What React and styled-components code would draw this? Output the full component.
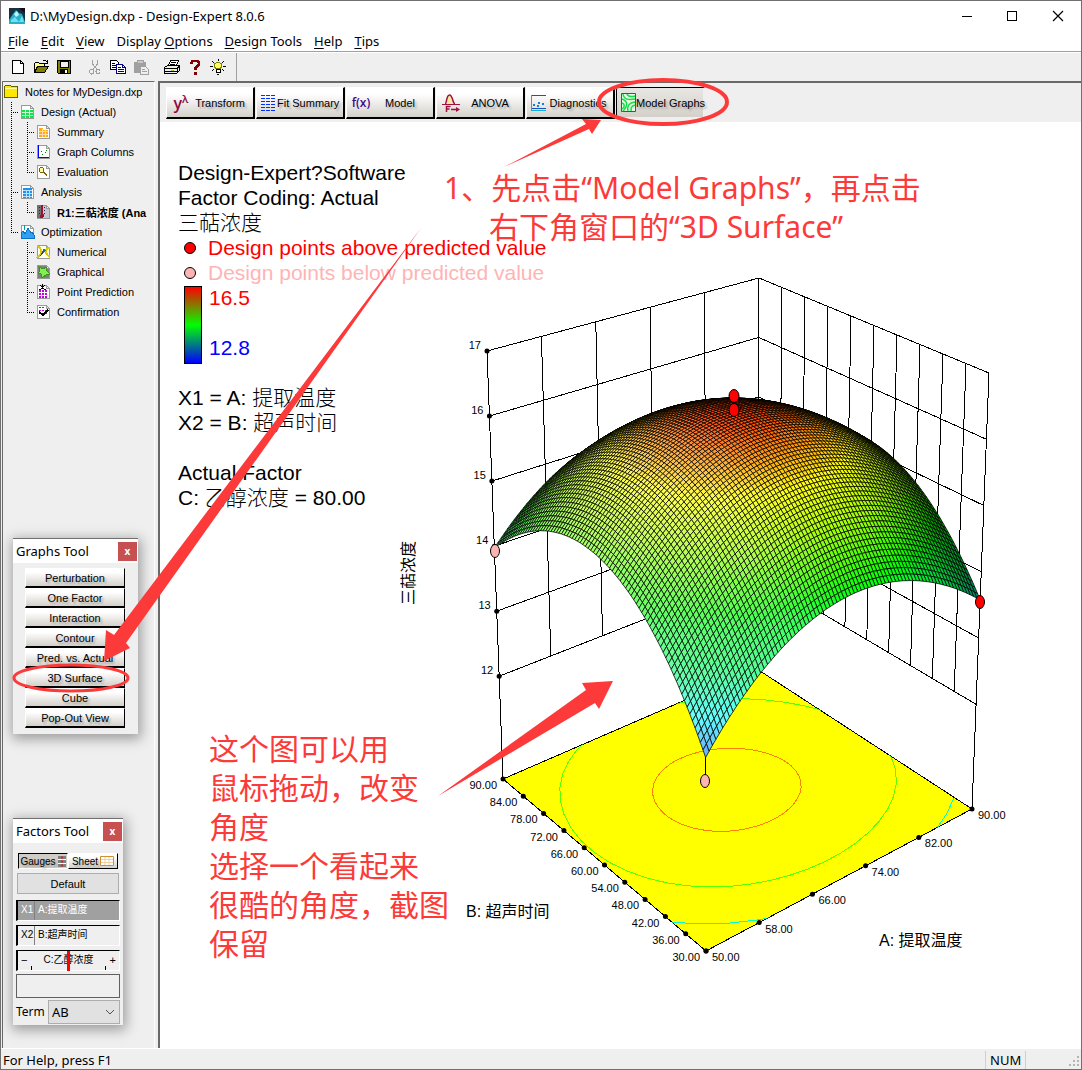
import React from "react";
import styled, { createGlobalStyle, css } from "styled-components";

const RED = "#fd3a3a";
const UI = `"Noto Sans", "Noto Sans CJK SC", sans-serif`;
const ARIAL = `"Liberation Sans", "Noto Sans CJK SC", sans-serif`;

/* ---------- response surface ---------- */

// corners of the plot box, floor first, then top
const BOX = {
  f00: [706, 951],
  f10: [972, 809],
  f01: [503, 779],
  f11: [757, 669],
  t00: [705, 468],
  t10: [989, 373],
  t01: [487, 351],
  t11: [759, 278],
};
const Z_FLOOR = 10.42;
const Z_TOP = 17;
const STEPS = 80;

const level = (z) => (z - Z_FLOOR) / (Z_TOP - Z_FLOOR);

function project(a, b, t) {
  return [0, 1].map((i) => {
    const mix = (p) =>
      BOX[p + "00"][i] * (1 - a) * (1 - b) +
      BOX[p + "10"][i] * a * (1 - b) +
      BOX[p + "01"][i] * (1 - a) * b +
      BOX[p + "11"][i] * a * b;
    return mix("f") * (1 - t) + mix("t") * t;
  });
}

const response = (a, b) =>
  0.4006 + 0.77 * a - 0.691 * a * a + 0.961 * b - 0.822 * b * b - 0.07 * a * b;

const toPoints = (list) =>
  list.map((p) => p.map((n) => n.toFixed(1)).join(",")).join(" ");

function ramp(stops, v) {
  if (v <= stops[0][0]) return stops[0][1];
  for (let i = 1; i < stops.length; i++) {
    const [x1, y1] = stops[i];
    const [x0, y0] = stops[i - 1];
    if (v <= x1) return y0 + ((v - x0) / (x1 - x0)) * (y1 - y0);
  }
  return stops[stops.length - 1][1];
}

const HUES = [
  [0.4, 215],
  [0.47, 176],
  [0.53, 145],
  [0.6, 128],
  [0.66, 105],
  [0.72, 82],
  [0.79, 60],
  [0.83, 38],
  [0.875, 14],
];
const LIGHTS = [
  [0, 70],
  [0.3, 64],
  [0.5, 53],
  [0.72, 50],
  [0.85, 42],
  [1, 26],
];

// cells are ordered from the far corner to the near one
function buildMesh() {
  const cells = [];
  for (let i = STEPS - 1; i >= 0; i--) {
    for (let j = STEPS - 1; j >= 0; j--) {
      const a0 = i / STEPS;
      const a1 = (i + 1) / STEPS;
      const b0 = j / STEPS;
      const b1 = (j + 1) / STEPS;
      const am = (a0 + a1) / 2;
      const bm = (b0 + b1) / 2;
      const corner = (a, b) => project(a, b, response(a, b));
      cells.push({
        key: `${i}-${j}`,
        points: toPoints([
          corner(a0, b0),
          corner(a1, b0),
          corner(a1, b1),
          corner(a0, b1),
        ]),
        fill: `hsl(${ramp(HUES, response(am, bm)).toFixed(0)}, 100%, ${ramp(
          LIGHTS,
          am
        ).toFixed(0)}%)`,
      });
    }
  }
  return cells;
}

// contour of the quadratic at a given drop below its peak
function contour(drop) {
  const pa = 0.522;
  const pb = 0.565;
  const pts = [];
  for (let k = 0; k < 48; k++) {
    const th = (k / 48) * Math.PI * 2;
    const ca = Math.cos(th);
    const cb = Math.sin(th);
    const r = Math.sqrt(
      drop / (0.691 * ca * ca + 0.822 * cb * cb + 0.07 * ca * cb)
    );
    pts.push(project(pa + r * ca, pb + r * cb, 0));
  }
  return toPoints(pts);
}

const MESH = buildMesh();
const FLOOR = toPoints([BOX.f00, BOX.f10, BOX.f11, BOX.f01]);
const Z_TICKS = [17, 16, 15, 14, 13, 12];
const A_TICKS = [50, 58, 66, 74, 82, 90];
const B_TICKS = [30, 36, 42, 48, 54, 60, 66, 72, 78, 84, 90];

function Line({ from, to }) {
  return <line x1={from[0]} y1={from[1]} x2={to[0]} y2={to[1]} />;
}

function Dot({ at }) {
  return <ellipse cx={at[0]} cy={at[1]} rx="2.5" ry="2.5" />;
}

function SurfacePlot() {
  const low = level(12);
  return (
    <Plot viewBox="390 260 640 720" width="640" height="720" aria-label="3D Surface">
      <clipPath id="floor">
        <polygon points={FLOOR} />
      </clipPath>
      <g stroke="#000" strokeWidth="1" shapeRendering="crispEdges" fill="none">
        {Z_TICKS.map((z) => (
          <React.Fragment key={z}>
            <Line from={project(0, 1, level(z))} to={project(1, 1, level(z))} />
            <Line from={project(1, 1, level(z))} to={project(1, 0, level(z))} />
          </React.Fragment>
        ))}
        {[0, 0.2, 0.4, 0.6, 0.8, 1].map((a) => (
          <Line key={a} from={project(a, 1, 1)} to={project(a, 1, a ? low : 0)} />
        ))}
        {[0, 1, 2, 3, 4, 5, 6, 7, 8, 9].map((n) => (
          <Line
            key={n}
            from={project(1, n / 10, 1)}
            to={project(1, n / 10, n ? low : 0)}
          />
        ))}
        <polygon points={FLOOR} fill="#ffff00" />
        <g clipPath="url(#floor)">
          <polygon points={contour(0.035)} stroke="#ff8000" />
          <polygon points={contour(0.18)} stroke="#55ff00" />
          <polygon points={contour(0.333)} stroke="#00ffc8" />
        </g>
        <line x1="705" y1="757" x2="705" y2="776" />
      </g>
      <g stroke="#000" strokeWidth="0.75">
        {MESH.map((c) => (
          <polygon key={c.key} points={c.points} fill={c.fill} />
        ))}
      </g>
      <g>
        {Z_TICKS.map((z) => (
          <Dot key={z} at={project(0, 1, level(z))} />
        ))}
        {A_TICKS.map((v) => (
          <Dot key={v} at={project((v - 50) / 40, 0, 0)} />
        ))}
        {B_TICKS.map((v) => (
          <Dot key={v} at={project(0, (v - 30) / 60, 0)} />
        ))}
      </g>
      <g stroke="#000" fill="#ff0000">
        <ellipse cx="734" cy="410" rx="5" ry="6.5" />
        <ellipse cx="734" cy="396" rx="5" ry="6.5" />
        <ellipse cx="980" cy="602" rx="4.5" ry="6.5" />
        <ellipse cx="495" cy="551" rx="4.5" ry="6.5" fill="#ffb4b4" />
        <ellipse cx="705" cy="781" rx="4.5" ry="6.5" fill="#ffb4b4" />
      </g>
      <TickText>
        {Z_TICKS.map((z) => {
          const [x, y] = project(0, 1, level(z));
          return (
            <text key={z} x={x - 6} y={y - 2} textAnchor="end">
              {z}
            </text>
          );
        })}
        {B_TICKS.map((v) => {
          const [x, y] = project(0, (v - 30) / 60, 0);
          return (
            <text key={v} x={x - 6} y={y + 10} textAnchor="end">
              {v.toFixed(2)}
            </text>
          );
        })}
        {A_TICKS.map((v) => {
          const [x, y] = project((v - 50) / 40, 0, 0);
          return (
            <text key={v} x={x + 6} y={y + 10}>
              {v.toFixed(2)}
            </text>
          );
        })}
      </TickText>
      <AxisText>
        <text x="466" y="917">B: 超声时间</text>
        <text x="879" y="946">A: 提取温度</text>
        <text transform="translate(414 605) rotate(-90)">三萜浓度</text>
      </AxisText>
    </Plot>
  );
}

/* ---------- icons ---------- */

const Svg = ({ size = 16, children }) => (
  <svg width={size} height={size} viewBox="0 0 16 16" fill="none" shapeRendering="crispEdges" aria-hidden="true">
    {children}
  </svg>
);

const Formula = styled.i`
  width: 20px;
  color: ${(props) => props.$color};
  font: 600 ${(props) => (props.$small ? "12px" : "16px")} / 18px "Open Sans", sans-serif;
  text-shadow: none;

  sup {
    font-size: 11px;
    line-height: 0;
  }
`;

const TOOL_ICONS = {
  New: (
    <path d="M2.5 1.5h8l3 3v10h-11z M10.5 1.5v3h3" fill="#fff" stroke="#000" />
  ),
  Open: (
    <>
      <path d="M1.5 13.5V4.5l1-1h3l1 1h5v3" fill="#ffff80" stroke="#000" />
      <path d="M1.5 13.5l3-6h11l-4 6z" fill="#808000" stroke="#000" />
      <path d="M9.5 2.5l1-1h2l2 2M14.5 1v3h-3" stroke="#000" />
    </>
  ),
  Save: (
    <>
      <path d="M1.5 1.5h13v13h-12l-1-1z" fill="#808000" stroke="#000" />
      <path d="M4 2h8v6H4z" fill="#efefef" stroke="#000" />
      <path d="M4 10h8v5H4z" fill="#000" />
      <path d="M9 11h2v3H9z" fill="#fff" />
    </>
  ),
  Cut: (
    <>
      <path d="M5.5 1v4l5 6M10.5 1v4l-5 6" stroke="#a0a0a0" />
      <ellipse cx="4.5" cy="12.5" rx="2" ry="2.5" stroke="#a0a0a0" />
      <ellipse cx="11" cy="12.5" rx="2" ry="2.5" stroke="#a0a0a0" />
    </>
  ),
  Copy: (
    <>
      <path d="M.5 1.5h6l2 2v7h-8z" fill="#fff" stroke="#000" />
      <path d="M2 4.5h3M2 6.5h4M2 8.5h4" stroke="#000" />
      <path d="M6.5 5.5h6l3 3v6h-9z" fill="#fff" stroke="#000080" />
      <path d="M8 8.5h3M8 10.5h6M8 12.5h6M12.5 5.5v3h3" stroke="#000080" />
    </>
  ),
  Paste: (
    <>
      <path d="M1 3h12v11H1z" fill="#a0a0a0" />
      <path d="M4 1.5h6v3H4z" fill="#c8c8c8" stroke="#a0a0a0" />
      <path d="M7.5 7.5h5l3 3v5h-8z" fill="#efefef" stroke="#a0a0a0" />
      <path d="M9 10.5h3M9 12.5h5" stroke="#a0a0a0" />
    </>
  ),
  Print: (
    <>
      <path d="M4.5 6.5l2-5h8l-2 5z" fill="#fff" stroke="#000" />
      <path d="M7 3.5h5M6 5.5h5" stroke="#000" />
      <path d="M.5 8.5l3-2h12v5l-3 3h-12z" fill="#efefef" stroke="#000" />
      <path d="M1 9.5h12l2-2M1 12.5h12v-3M13.5 9v5" stroke="#000" />
      <path d="M7 11h3v1H7z" fill="#c8c800" />
    </>
  ),
  Help: (
    <>
      <path d="M4.5 5V3.5l1-1.5h5l1.5 1.5V6L8.5 8.5V11" stroke="#800000" strokeWidth="2.6" />
      <path d="M7 13h3v2.5H7z" fill="#800000" />
    </>
  ),
  Tip: (
    <>
      <path d="M5.5 9.5L4.5 7.5V5l2-1.5h3l2 1.5v2.5l-1 2z" fill="#ffff60" stroke="#808000" />
      <path d="M6 10.5h4v3H6z" fill="#fff" stroke="#000" />
      <path d="M7 15.5h2M8 0v2M2 2l2 2M14 2l-2 2M0 7h3M13 7h3M2 12l2-2M14 12l-2-2" stroke="#000" />
    </>
  ),
};

const Sheet = ({ fill = "#fff" }) => (
  <path d="M1.5 1.5h9l3 3v10h-12z M10.5 1.5v3h3" fill={fill} stroke="#9a9a9a" />
);

const TREE_ICONS = {
  folder: (
    <>
      <path d="M.5 13.5v-11l1-1h5l1 1h6v11z" fill="#ffe800" stroke="#606000" />
      <path d="M1 4.5h12" stroke="#fff8a0" />
    </>
  ),
  design: (
    <>
      <Sheet />
      <path d="M2 6h11v8H2z" fill="#18e050" />
      <path d="M2 8.5h11M2 11.5h11M5.5 6v8M9.5 6v8" stroke="#c8ffd0" />
    </>
  ),
  summary: (
    <>
      <Sheet />
      <path d="M3 4h4v2h5v7H3z" fill="#ffa818" />
      <path d="M3 7.5h9M3 10.5h9M6.5 5v8M9.5 5v8" stroke="#ffe0a0" />
    </>
  ),
  columns: (
    <>
      <Sheet />
      <path d="M2.5 1v12.5h10" stroke="#0000ff" />
      <path d="M5 7h1v1H5zM9 8h1v1H9z" fill="#f00" />
      <path d="M6 10h1v1H6zM10 6h1v1h-1z" fill="#080" />
    </>
  ),
  evaluation: (
    <>
      <Sheet />
      <circle cx="5.5" cy="6" r="2.5" stroke="#806000" fill="#fff8a0" />
      <path d="M7.5 8l3.5 3.500" stroke="#806000" strokeWidth="2" />
    </>
  ),
  analysis: (
    <>
      <Sheet />
      <path d="M3 4h9v10H3z" fill="#2090f0" />
      <path d="M3 6.5h9M3 9.5h9M3 12h9M6 7v7M9 7v7" stroke="#b8e0ff" />
    </>
  ),
  response: (
    <>
      <Sheet fill="#c8c8d0" />
      <path d="M1 1h4v13H1z" fill="#707070" />
      <path d="M5 1h2v12H5z" fill="#a01030" />
      <circle cx="6" cy="12" r="2" fill="#a01030" />
      <path d="M3.5 3v9M8.5 3v9" stroke="#202080" strokeDasharray="1 2" />
    </>
  ),
  optimization: (
    <>
      <Sheet />
      <path d="M1 14V9l2-2 2 3 3-6 3 5 1-1 2 3v3z" fill="#30a0f0" stroke="#1070c0" />
      <path d="M4.5 1v5" stroke="#00a0a0" />
    </>
  ),
  numerical: (
    <>
      <Sheet fill="#fffff0" />
      <path d="M1 2c3 1 5 4 4 7s-3 3-4 5M14 4c-4 0-5 3-4 5s2 3 4 4" stroke="#e0c800" strokeWidth="2" />
      <path d="M7 5l3 1-1 2-3 1z" fill="#008080" />
      <path d="M4 12l4-5" stroke="#404040" />
    </>
  ),
  graphical: (
    <>
      <Sheet fill="#808080" />
      <path d="M3 3l4 2 3-2 1 4 3 3-4 1-4 3-1-4-3-1 2-2z" fill="#80f050" stroke="#409020" />
    </>
  ),
  point: (
    <>
      <Sheet />
      <path d="M3 7h9M3 10h9M3 13h9" stroke="#c000e0" strokeWidth="2" strokeDasharray="2 1" />
      <path d="M6.5 0v5M4 1l2.500 2L9 1M3 6l3.500-2L10 6" stroke="#000" />
    </>
  ),
  confirmation: (
    <>
      <Sheet />
      <path d="M3 3.5h6M3 6.5h9M3 9.5h9" stroke="#c000e0" strokeDasharray="2 1" />
      <path d="M3 8l4 3 5-5" stroke="#000" strokeWidth="2" />
    </>
  ),
};

const TAB_ICONS = {
  Transform: (
    <Formula $color="#8b0a3c">
      y<sup>λ</sup>
    </Formula>
  ),
  "Fit Summary": (
    <Svg size={16}>
      <path d="M0 .5h15M0 3.5h15M0 6.5h15M0 9.5h15M0 12.5h15M0 15.5h15" stroke="#0030ff" strokeDasharray="4 1" />
    </Svg>
  ),
  Model: <Formula $color="#3c0a8b" $small>f(x)</Formula>,
  ANOVA: (
    <svg width="20" height="20" viewBox="0 0 20 20" fill="none" aria-hidden="true">
      <path d="M4 11c2 0 1-9 4.500-9s3 9 5.500 9" fill="#f8e8a0" stroke="#a01040" strokeWidth="1.5" />
      <path d="M1 11.5h18" stroke="#a01040" />
      <path d="M5.5 19v-5.500h4M5.5 16h3M10 16.5h6" stroke="#a01040" strokeWidth="1.5" />
      <path d="M15 14l4 2.5-4 2.5z" fill="#a01040" />
    </svg>
  ),
  Diagnostics: (
    <Svg>
      <path d="M.5 0v15.5H15" stroke="#10b0d0" />
      <path d="M1 .5h14M1 13.5h14" stroke="#2050c0" />
      <path d="M2 9h2v2H2zM6 10h2v2H6zM7 7h2v2H7zM11 8h2v2h-2z" fill="#1080e0" />
    </Svg>
  ),
  "Model Graphs": (
    <svg width="15" height="19" viewBox="0 0 15 19" fill="none" aria-hidden="true">
      <path d="M.5.5h14v18H.5z" fill="#e8f8e8" stroke="#505050" />
      <path d="M2 1c1 6 6 6 12 5M6 1c1 3 4 3 8 2M1 6c6 2 6 7 1 12M1 10c3 1 3 4 0 6M14 9c-7 1-8 5-7 9M14 12c-4 1-4 3-4 6" stroke="#10e040" strokeWidth="1.5" />
    </svg>
  ),
};

/* ---------- data ---------- */

const MENU = [
  ["", "F", "ile"],
  ["", "E", "dit"],
  ["", "V", "iew"],
  ["Display ", "O", "ptions"],
  ["", "D", "esign Tools"],
  ["", "H", "elp"],
  ["", "T", "ips"],
];

const TREE = [
  { icon: "folder", text: "Notes for MyDesign.dxp", guides: [] },
  { icon: "design", text: "Design (Actual)", guides: ["tee"] },
  { icon: "summary", text: "Summary", guides: ["line", "tee"] },
  { icon: "columns", text: "Graph Columns", guides: ["line", "tee"] },
  { icon: "evaluation", text: "Evaluation", guides: ["line", "end"] },
  { icon: "analysis", text: "Analysis", guides: ["tee"] },
  { icon: "response", text: "R1:三萜浓度 (Ana", guides: ["line", "end"], bold: true },
  { icon: "optimization", text: "Optimization", guides: ["end"] },
  { icon: "numerical", text: "Numerical", guides: ["none", "tee"] },
  { icon: "graphical", text: "Graphical", guides: ["none", "tee"] },
  { icon: "point", text: "Point Prediction", guides: ["none", "tee"] },
  { icon: "confirmation", text: "Confirmation", guides: ["none", "end"] },
];

const GUIDE_PATHS = {
  line: "M7.5 0v20",
  tee: "M7.5 0v20M9 10.5h5",
  end: "M7.5 0v11M9 10.5h5",
  none: "",
};

const GRAPHS = [
  "Perturbation",
  "One Factor",
  "Interaction",
  "Contour",
  "Pred. vs. Actual",
  "3D Surface",
  "Cube",
  "Pop-Out View",
];

/* ---------- page ---------- */

export default function App() {
  return (
    <Window>
      <GlobalStyle />
      <TitleBar>
        <AppIcon />
        <Title>D:\MyDesign.dxp - Design-Expert 8.0.6</Title>
        <Caption aria-label="Minimize">
          <Svg><path d="M4 8.5h10" stroke="#000" /></Svg>
        </Caption>
        <Caption aria-label="Maximize">
          <Svg><path d="M3.5 3.5h9v9h-9z" stroke="#000" /></Svg>
        </Caption>
        <Caption aria-label="Close">
          <svg width="16" height="16" viewBox="0 0 16 16">
            <path d="M3 3l10 10M13 3L3 13" stroke="#000" strokeWidth="1.2" />
          </svg>
        </Caption>
      </TitleBar>
      <MenuBar>
        {MENU.map(([pre, key, post]) => (
          <MenuItem key={pre + key + post}>
            {pre}
            <u>{key}</u>
            {post}
          </MenuItem>
        ))}
      </MenuBar>
      <Toolbar>
        <ToolGroup>
          {Object.keys(TOOL_ICONS).map((name) => (
            <ToolButton key={name} aria-label={name} $gap={name === "Cut" || name === "Print"}>
              <Svg>{TOOL_ICONS[name]}</Svg>
            </ToolButton>
          ))}
        </ToolGroup>
      </Toolbar>
      <Body>
        <Sidebar>
          {TREE.map((row) => (
            <TreeRow key={row.text} $bold={row.bold}>
              {row.guides.map((g, i) => (
                <svg key={i} width="16" height="20" aria-hidden="true">
                  <path d={GUIDE_PATHS[g]} stroke="#000" strokeDasharray="1 1" shapeRendering="crispEdges" />
                </svg>
              ))}
              <Svg>{TREE_ICONS[row.icon]}</Svg>
              <span>{row.text}</span>
            </TreeRow>
          ))}
        </Sidebar>
        <Main>
          <Tabs>
            {Object.keys(TAB_ICONS).map((name) => (
              <Tab key={name} $on={name === "Model Graphs"}>
                {TAB_ICONS[name]}
                <span>{name}</span>
              </Tab>
            ))}
          </Tabs>
          <Canvas>
            <Legend>
              <p>Design-Expert?Software</p>
              <p>Factor Coding: Actual</p>
              <p>三萜浓度</p>
              <Key $color="#ff0000">
                <i />
                Design points above predicted value
              </Key>
              <Key $color="#ffb4b4">
                <i />
                Design points below predicted value
              </Key>
              <Scale>
                <ScaleBar />
                <div>
                  <ScaleText $color="#ff0000">16.5</ScaleText>
                  <ScaleText $color="#0000ff">12.8</ScaleText>
                </div>
              </Scale>
              <p>X1 = A: 提取温度</p>
              <p>X2 = B: 超声时间</p>
              <p>&nbsp;</p>
              <p>Actual Factor</p>
              <p>C: 乙醇浓度 = 80.00</p>
            </Legend>
            <SurfacePlot />
          </Canvas>
        </Main>
      </Body>
      <StatusBar>
        <span>For Help, press F1</span>
        <StatusCell>NUM</StatusCell>
        <StatusCell />
        <svg width="16" height="18" viewBox="0 0 16 18" aria-hidden="true">
          <path d="M12 5h2v2h-2zM8 9h2v2H8zM12 9h2v2h-2zM4 13h2v2H4zM8 13h2v2H8zM12 13h2v2h-2z" fill="#b4b4b4" />
        </svg>
      </StatusBar>

      <GraphsTool>
        <PaletteTitle>
          Graphs Tool
          <PaletteClose aria-label="Close Graphs Tool">x</PaletteClose>
        </PaletteTitle>
        <GraphList>
          {GRAPHS.map((g) => (
            <GraphButton key={g}>{g}</GraphButton>
          ))}
        </GraphList>
      </GraphsTool>

      <FactorsTool>
        <PaletteTitle>
          Factors Tool
          <PaletteClose aria-label="Close Factors Tool">x</PaletteClose>
        </PaletteTitle>
        <FactorsBody>
          <Toggles>
            <Toggle $on>
              Gauges
              <svg width="8" height="13" aria-hidden="true">
                <path d="M0 2.5h8M0 6.5h8M0 10.5h8" stroke="#808080" strokeWidth="3" />
                <path d="M0 4.5h8M0 8.5h8" stroke="#fff" />
                <path d="M3 2.5h2M3 6.5h2M3 10.5h2" stroke="#e02020" strokeWidth="2" />
              </svg>
            </Toggle>
            <Toggle>
              Sheet
              <svg width="14" height="10" aria-hidden="true">
                <path d="M.5.5h13v9H.5z" fill="#fff" stroke="#d09030" />
                <path d="M1 3.5h12M1 6.5h12M5 1v8M9 1v8" stroke="#f0d0a0" />
              </svg>
            </Toggle>
          </Toggles>
          <DefaultButton>Default</DefaultButton>
          <Factor $on>
            <b>X1</b>
            <span>A:提取温度</span>
          </Factor>
          <Factor>
            <b>X2</b>
            <span>B:超声时间</span>
          </Factor>
          <Gauge>
            <em>−</em>
            <label htmlFor="factor-c">C:乙醇浓度</label>
            <em>+</em>
            <input id="factor-c" type="range" min="60" max="100" defaultValue="80" />
          </Gauge>
          <Readout aria-label="Factor value" />
          <TermRow>
            <label htmlFor="term">Term</label>
            <TermBox>
              <select id="term" defaultValue="AB">
                <option>AB</option>
                <option>AC</option>
                <option>BC</option>
              </select>
              <svg width="10" height="6" viewBox="0 0 10 6" aria-hidden="true">
                <path d="M1 1l4 4 4-4" fill="none" stroke="#505050" />
              </svg>
            </TermBox>
          </TermRow>
        </FactorsBody>
      </FactorsTool>

      <Marks width="1082" height="1070" viewBox="0 0 1082 1070" aria-hidden="true">
        <g fill={RED}>
          <path d="M504 167L586 124L582 119L601 120L592 134L589 129z" />
          <path d="M421 228L114 635L106 630L104 661L130 648L126 643z" />
          <path d="M438 796L586 690L582 683L613 681L599 709L595 703z" />
        </g>
        <g fill="none" stroke={RED}>
          <ellipse cx="663" cy="102" rx="64" ry="22" strokeWidth="4" />
          <ellipse cx="71" cy="678" rx="57" ry="13" strokeWidth="3" />
        </g>
      </Marks>
      <StepNote>
        1、先点击“Model Graphs”，再点击
        <div>右下角窗口的“3D Surface”</div>
      </StepNote>
      <DragNote>
        这个图可以用
        <br />
        鼠标拖动，改变
        <br />
        角度
        <br />
        选择一个看起来
        <br />
        很酷的角度，截图
        <br />
        保留
      </DragNote>
    </Window>
  );
}

function AppIcon() {
  return (
    <svg width="16" height="16" viewBox="0 0 16 16" aria-hidden="true">
      <path d="M0 0h16v16H0z" fill="#183040" />
      <path d="M0 12l4-6 3-4 3 3 3 1 3 8v2H0z" fill="#28b0c8" />
      <path d="M5 6l3-3 2 4-3 2z" fill="#b8f8ff" />
      <path d="M2 12l4-3 4 5 3-6 2 6H2z" fill="#70e0f0" />
      <path d="M10 0h6v5l-3-2z" fill="#101018" />
    </svg>
  );
}

const GlobalStyle = createGlobalStyle`
  * {
    box-sizing: border-box;
  }

  body {
    margin: 0;
    background: #efefef;
  }

  button, input, select {
    font: inherit;
    color: inherit;
    margin: 0;
    padding: 0;
    border: 0;
    background: none;
  }

  p {
    margin: 0;
  }
`;

const Window = styled.div`
  position: relative;
  display: flex;
  flex-direction: column;
  min-height: 100vh;
  overflow: hidden;
  border: 1px solid #707070;
  background: #efefef;
  color: #000;
  font-family: ${ARIAL};
  font-size: 11px;

  svg {
    flex: none;
  }
`;

const TitleBar = styled.header`
  display: flex;
  align-items: center;
  height: 29px;
  padding-left: 8px;
  background: #fff;
  font-family: ${UI};
  font-size: 13px;
`;

const Title = styled.span`
  flex: 1;
  padding-left: 5px;
`;

const Caption = styled.button`
  display: flex;
  align-items: center;
  justify-content: center;
  width: 46px;
  height: 29px;
`;

const MenuBar = styled.nav`
  display: flex;
  gap: 12px;
  height: 22px;
  padding-left: 7px;
  background: #fff;
  border-bottom: 1px solid #a0a0a0;
  font-family: ${UI};
  font-size: 13px;
  line-height: 20px;
`;

const MenuItem = styled.button`
  line-height: 20px;

  u {
    text-underline-offset: 2px;
  }
`;

const Toolbar = styled.div`
  display: flex;
  height: 29px;
  border-top: 1px solid #fff;
`;

const ToolGroup = styled.div`
  display: flex;
  align-items: center;
  width: 236px;
  padding: 0 0 1px 5px;
  border-right: 1px solid #a0a0a0;
`;

const ToolButton = styled.button`
  display: flex;
  align-items: center;
  justify-content: center;
  width: 23px;
  height: 22px;
  margin-left: ${(props) => (props.$gap ? "8px" : "0")};
`;

const Body = styled.div`
  display: flex;
  flex: 1;
`;

const Sidebar = styled.aside`
  width: 153px;
  flex: none;
  margin-left: 1px;
  border-top: 1px solid #696969;
  border-left: 1px solid #696969;
  border-right: 1px solid #fff;
  overflow: hidden;
`;

const TreeRow = styled.div`
  display: flex;
  align-items: center;
  height: 20px;
  padding-left: 1px;
  white-space: nowrap;
  font-weight: ${(props) => (props.$bold ? "bold" : "normal")};

  span {
    padding-left: 5px;
  }
`;

const Main = styled.main`
  display: flex;
  flex-direction: column;
  flex: 1;
  min-width: 0;
  margin-left: 3px;
  border-top: 2px solid #696969;
  border-left: 2px solid #696969;
`;

const Tabs = styled.div`
  display: flex;
  gap: 1px;
  height: 39px;
  padding: 4px 0 3px 6px;
`;

const raised = css`
  border-style: solid;
  border-width: 1px 2px 2px 1px;
  border-color: #fff #000 #000 #fff;
  background: linear-gradient(#fff 20%, #d4d1ca);
  text-shadow: 2px 2px 2px rgba(0, 0, 0, 0.25);
`;

const Tab = styled.button`
  display: flex;
  align-items: center;
  width: 89px;
  height: 32px;
  padding-left: 4px;
  white-space: nowrap;
  ${raised}

  span {
    flex: 1;
    padding-right: 4px;
    text-align: center;
  }

  ${(props) =>
    props.$on &&
    css`
      border-color: #000 transparent transparent #000;
      background: linear-gradient(#e8e6e2, #d4d1ca);
      background-clip: padding-box;
    `}
`;

const Canvas = styled.section`
  position: relative;
  flex: 1;
  background: #fff;
`;

const Legend = styled.div`
  padding: 38px 0 0 18px;
  font-size: 21px;
  line-height: 25px;
  font-weight: 300;
  white-space: nowrap;

  p {
    height: 25px;
  }
`;

const Key = styled.div`
  display: flex;
  align-items: center;
  height: 25px;
  color: ${(props) => props.$color};

  i {
    width: 12px;
    height: 12px;
    margin: 0 12px 0 6px;
    border: 1px solid #000;
    border-radius: 50%;
    background: ${(props) => props.$color};
  }
`;

const Scale = styled.div`
  display: flex;
  gap: 7px;
  height: 100px;
  padding-left: 6px;
`;

const ScaleBar = styled.div`
  width: 18px;
  height: 78px;
  margin-top: 1px;
  border: 1px solid #000;
  background: linear-gradient(#ff0000, #00ff00 50%, #0000ff);
`;

const ScaleText = styled.div`
  height: 50px;
  color: ${(props) => props.$color};
`;

const Plot = styled.svg`
  position: absolute;
  left: 230px;
  top: 138px;
`;

const TickText = styled.g`
  font-size: 11px;
`;

const AxisText = styled.g`
  font-size: 16px;
`;

const StatusBar = styled.footer`
  display: flex;
  align-items: center;
  height: 21px;
  padding: 1px 0 0 2px;
  border-top: 1px solid #fff;
  font-family: ${UI};
  font-size: 13px;

  span {
    flex: 1;
  }
`;

const StatusCell = styled.div`
  width: 40px;
  height: 18px;
  padding-left: 4px;
  border-left: 1px solid #d0d0d0;
  line-height: 18px;
`;

const palette = css`
  position: absolute;
  left: 12px;
  background: #efefef;
  border-top: 1px solid #707070;
  box-shadow: 1px 3px 12px 2px rgba(0, 0, 0, 0.35);
`;

const GraphsTool = styled.section`
  ${palette}
  top: 537px;
  width: 125px;
  height: 196px;
`;

const FactorsTool = styled.section`
  ${palette}
  top: 817px;
  width: 110px;
  height: 207px;
`;

const PaletteTitle = styled.header`
  display: flex;
  align-items: center;
  justify-content: space-between;
  height: 24px;
  padding: 0 1px 0 3px;
  background: #fff;
  font-family: ${UI};
  font-size: 13px;
`;

const PaletteClose = styled.button`
  width: 19px;
  height: 19px;
  background: #c75050;
  color: #fff;
  font-size: 10px;
  font-weight: bold;
  line-height: 16px;
`;

const GraphList = styled.div`
  padding: 5px 13px 0 12px;
`;

const GraphButton = styled.button`
  display: block;
  width: 100%;
  height: 20px;
  white-space: nowrap;
  ${raised}
  border-width: 1px 1px 2px 1px;
`;

const FactorsBody = styled.div`
  display: flex;
  flex-direction: column;
  padding: 10px 3px 0;
`;

const Toggles = styled.div`
  display: flex;
  height: 16px;
  padding: 0 2px;
  margin-bottom: 4px;
`;

const Toggle = styled.button`
  display: flex;
  flex: 1;
  align-items: center;
  justify-content: center;
  gap: 2px;
  font-size: 10px;
  ${raised}
  border-width: 1px;

  ${(props) =>
    props.$on &&
    css`
      border-color: #000 #fff #fff #000;
      background: #d0cdc6;
    `}
`;

const DefaultButton = styled.button`
  height: 21px;
  margin: 0 1px 6px;
  border: 1px solid #adadad;
  background: #e1e1e1;
`;

const sunken = css`
  border: 1px solid #fff;
  border-top-color: #000;
  border-left: 2px solid #000;
`;

const Factor = styled.button`
  display: flex;
  height: 21px;
  margin-bottom: 4px;
  ${sunken}
  font-size: 10px;
  line-height: 17px;
  text-align: left;
  color: ${(props) => (props.$on ? "#fff" : "#000")};
  background: ${(props) => (props.$on ? "#a0a0a0" : "#efefef")};

  b {
    width: 17px;
    height: 19px;
    padding-left: 3px;
    border-right: 1px solid #808080;
    font-weight: normal;
  }

  span {
    padding-left: 3px;
  }
`;

const Gauge = styled.div`
  position: relative;
  display: flex;
  justify-content: space-between;
  height: 21px;
  margin-bottom: 3px;
  padding: 0 3px;
  ${sunken}
  font-size: 10px;
  line-height: 17px;
  background: linear-gradient(#000, #000) 13px 100% / 1px 4px no-repeat,
    linear-gradient(#000, #000) 87px 100% / 1px 4px no-repeat;

  em {
    font-style: normal;
    font-size: 11px;
    line-height: 19px;
  }

  input {
    position: absolute;
    inset: 0;
    width: 100%;
    height: 19px;
    appearance: none;
  }

  input::-webkit-slider-thumb {
    appearance: none;
    width: 3px;
    height: 20px;
    background: #ff0000;
  }
`;

const Readout = styled.input`
  && {
    width: 100%;
    height: 24px;
    border: 1px solid #606060;
  }
`;

const TermRow = styled.div`
  display: flex;
  align-items: center;
  justify-content: space-between;
  height: 25px;
  margin-top: 1px;
  font-family: ${UI};
  font-size: 12px;
`;

const TermBox = styled.div`
  display: flex;
  align-items: center;
  width: 72px;
  height: 24px;
  padding-right: 4px;
  border: 1px solid #adadad;
  background: #e1e1e1;

  select {
    flex: 1;
    padding-left: 3px;
    appearance: none;
    font-size: 13px;
  }
`;

const Marks = styled.svg`
  position: absolute;
  left: -1px;
  top: -1px;
  pointer-events: none;
`;

const note = css`
  position: absolute;
  color: ${RED};
  font-family: ${UI};
  font-size: 30px;
  line-height: 39px;
  white-space: nowrap;
  pointer-events: none;
`;

const StepNote = styled.div`
  ${note}
  left: 443px;
  top: 167px;

  div {
    padding-left: 45px;
  }
`;

const DragNote = styled.div`
  ${note}
  left: 208px;
  top: 728px;
`;
